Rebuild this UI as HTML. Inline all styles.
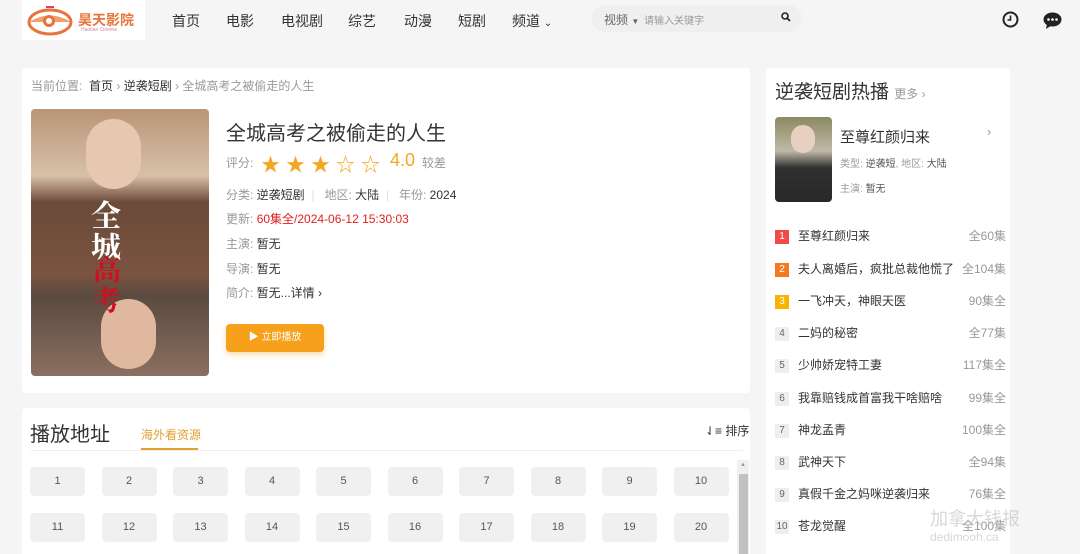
<!DOCTYPE html>
<html><head><meta charset="utf-8"><style>
*{margin:0;padding:0;box-sizing:border-box}
html,body{width:1080px;height:554px;overflow:hidden}
body{background:#f5f5f5;font-family:"Liberation Sans","Noto Sans CJK SC",sans-serif;color:#333;position:relative}
.a{position:absolute;white-space:nowrap}
.card{position:absolute;background:#fff;border-radius:4px}
.nav{font-size:14px;color:#333;top:11px}
.lbl{color:#999;font-size:12px}
.ep{position:absolute;width:55px;height:29px;background:#f0f0f0;border-radius:4px;font-size:11px;color:#555;text-align:center;line-height:29px}
.li{position:absolute;left:775px;width:256px;font-size:12px;color:#333;white-space:nowrap}
.li .n{display:inline-block;width:14px;height:14px;background:#eee;color:#666;font-size:10px;text-align:center;line-height:14px;margin-right:9px;vertical-align:middle}
.li .r{position:absolute;left:160px;width:71px;text-align:right;color:#999;white-space:nowrap}
</style></head><body>
<div class="a" style="left:22px;top:0;width:123px;height:40px;background:#fff"></div>
<svg class="a" style="left:26px;top:3px" width="50" height="34" viewBox="0 0 50 34"><ellipse cx="24" cy="19" rx="21" ry="12" fill="none" stroke="#e8743b" stroke-width="3"/><path d="M3 19 Q24 6 45 19" fill="#f0a070"/><circle cx="23" cy="18" r="6" fill="#e8743b"/><circle cx="23" cy="18" r="3" fill="#fff"/><rect x="20" y="3" width="8" height="2" fill="#e04060"/></svg>
<div class="a" style="left:78px;top:10px;font-size:14px;font-weight:bold;color:#e8743b">昊天影院</div>
<div class="a" style="left:81px;top:27px;font-size:5px;color:#c89">Haotian Cinema</div>
<div class="a nav" style="left:172px">首页</div>
<div class="a nav" style="left:226px">电影</div>
<div class="a nav" style="left:281px">电视剧</div>
<div class="a nav" style="left:348px">综艺</div>
<div class="a nav" style="left:404px">动漫</div>
<div class="a nav" style="left:458px">短剧</div>
<div class="a nav" style="left:512px">频道 <span style="font-size:10px">⌄</span></div>
<div class="a" style="left:592px;top:5px;width:210px;height:27px;background:#efefef;border-radius:14px"></div>
<div class="a" style="left:604px;top:11px;font-size:12px;color:#666">视频 <span style="font-size:8px">▼</span></div>
<div class="a" style="left:644px;top:12px;font-size:10px;color:#999">请输入关键字</div>
<svg class="a" style="left:781px;top:12px" width="10" height="10"><circle cx="4" cy="4" r="3" fill="none" stroke="#222" stroke-width="1.6"/><path d="M6 6 L9 9" stroke="#222" stroke-width="1.8"/></svg>
<svg class="a" style="left:1002px;top:11px" width="17" height="17"><circle cx="8.5" cy="8.5" r="7" fill="none" stroke="#222" stroke-width="2"/><path d="M8.5 4.5 V9 H5.5" fill="none" stroke="#222" stroke-width="1.6"/></svg>
<svg class="a" style="left:1043px;top:12px" width="19" height="17"><ellipse cx="9.5" cy="7.5" rx="9" ry="7" fill="#222"/><path d="M4 12 L3 17 L9 13z" fill="#222"/><circle cx="5.5" cy="7.5" r="1.3" fill="#fff"/><circle cx="9.5" cy="7.5" r="1.3" fill="#fff"/><circle cx="13.5" cy="7.5" r="1.3" fill="#fff"/></svg>

<div class="card" style="left:22px;top:68px;width:728px;height:325px"></div>
<div class="a" style="left:31px;top:77px;font-size:12px;color:#999">当前位置: &nbsp;<span style="color:#333">首页</span> › <span style="color:#333">逆袭短剧</span> › 全城高考之被偷走的人生</div>
<div class="a" style="left:31px;top:109px;width:178px;height:267px;border-radius:4px;overflow:hidden;background:linear-gradient(180deg,#b99577 0%,#d8c0a8 25%,#6b4a3a 35%,#7a5440 62%,#5a4a40 70%,#8a7060 100%)">
<div class="a" style="left:55px;top:10px;width:55px;height:70px;border-radius:28px;background:#e6c8b0"></div>
<div class="a" style="left:70px;top:190px;width:55px;height:70px;border-radius:28px;background:#e0b8a0"></div>
<div class="a" style="left:60px;top:88px;font-size:30px;color:#fff;font-weight:bold;font-family:'Noto Serif CJK SC',serif;line-height:32px">全<br>城</div>
<div class="a" style="left:62px;top:145px;font-size:28px;color:#d01020;font-weight:bold;font-family:'Noto Serif CJK SC',serif;line-height:30px">高<br>考</div></div>
<div class="a" style="left:226px;top:117px;font-size:20px;color:#333">全城高考之被偷走的人生</div>
<div class="a lbl" style="left:226px;top:154px">评分:</div>
<div class="a" style="left:261px;top:150px;font-size:19px;color:#f5a623;letter-spacing:6px">★★★☆☆</div>
<div class="a" style="left:390px;top:150px;font-size:18px;color:#f5a623">4.0</div>
<div class="a" style="left:422px;top:154px;font-size:12px;color:#999">较差</div>
<div class="a" style="left:226px;top:186px;font-size:12px"><span class="lbl">分类:</span> 逆袭短剧 &nbsp;<span style="color:#ddd">|</span>&nbsp; &nbsp;<span class="lbl">地区:</span> 大陆 &nbsp;<span style="color:#ddd">|</span>&nbsp; &nbsp;<span class="lbl">年份:</span> 2024</div>
<div class="a" style="left:226px;top:210px;font-size:12px"><span class="lbl">更新:</span> <span style="color:#e02020">60集全/2024-06-12 15:30:03</span></div>
<div class="a" style="left:226px;top:235px;font-size:12px"><span class="lbl">主演:</span> 暂无</div>
<div class="a" style="left:226px;top:260px;font-size:12px"><span class="lbl">导演:</span> 暂无</div>
<div class="a" style="left:226px;top:284px;font-size:12px"><span class="lbl">简介:</span> 暂无...详情 ›</div>
<div class="a" style="left:226px;top:324px;width:98px;height:28px;background:#f7a01c;border-radius:4px;color:#fff;font-size:10px;text-align:center;line-height:28px;box-shadow:0 3px 6px rgba(247,160,28,.35)">▶ 立即播放</div>

<div class="card" style="left:22px;top:408px;width:728px;height:160px"></div>
<div class="a" style="left:30px;top:418px;font-size:20px;color:#333">播放地址</div>
<div class="a" style="left:141px;top:426px;font-size:12px;color:#e0a030">海外看资源</div>
<div class="a" style="left:141px;top:448px;width:57px;height:2px;background:#e0a030"></div>
<div class="a" style="left:30px;top:450px;width:713px;height:1px;background:#f0f0f0"></div>
<div class="a" style="left:705px;top:422px;font-size:12px;color:#333">⇃≡ 排序</div>
<div class="a" style="left:737px;top:460px;width:12px;height:94px;background:#f0f0f0"></div>
<div class="a" style="left:739px;top:474px;width:9px;height:80px;background:#c1c1c1"></div>
<div class="a" style="left:740px;top:462px;font-size:6px;color:#999">▲</div>
<div id="eps"></div>

<div class="card" style="left:766px;top:68px;width:244px;height:490px"></div>
<div class="a" style="left:775px;top:77px;font-size:19px;color:#333">逆袭短剧热播 <span style="font-size:12px;color:#999">更多 ›</span></div>
<div class="a" style="left:775px;top:117px;width:57px;height:85px;border-radius:4px;background:linear-gradient(180deg,#8a8a60 0%,#c0b8a8 40%,#303030 60%,#282828 100%)"><div class="a" style="left:16px;top:8px;width:24px;height:28px;border-radius:12px;background:#e8d0c0"></div></div>
<div class="a" style="left:840px;top:126px;font-size:15px;color:#333">至尊红颜归来</div>
<div class="a" style="left:987px;top:124px;font-size:13px;color:#999">›</div>
<div class="a" style="left:840px;top:155px;font-size:10px;color:#999">类型: <span style="color:#555">逆袭短</span>, 地区: <span style="color:#555">大陆</span></div>
<div class="a" style="left:840px;top:180px;font-size:10px;color:#999">主演: <span style="color:#555">暂无</span></div>
<div class="li" style="top:227px"><span class="n" style="background:#f04a4a;color:#fff">1</span>至尊红颜归来<span class="r">全60集</span></div>
<div class="li" style="top:260px"><span class="n" style="background:#f47920;color:#fff">2</span>夫人离婚后，疯批总裁他慌了<span class="r">全104集</span></div>
<div class="li" style="top:292px"><span class="n" style="background:#f8b500;color:#fff">3</span>一飞冲天，神眼天医<span class="r">90集全</span></div>
<div class="li" style="top:324px"><span class="n">4</span>二妈的秘密<span class="r">全77集</span></div>
<div class="li" style="top:356px"><span class="n">5</span>少帅娇宠特工妻<span class="r">117集全</span></div>
<div class="li" style="top:389px"><span class="n">6</span>我靠赔钱成首富我干啥赔啥<span class="r">99集全</span></div>
<div class="li" style="top:421px"><span class="n">7</span>神龙孟青<span class="r">100集全</span></div>
<div class="li" style="top:453px"><span class="n">8</span>武神天下<span class="r">全94集</span></div>
<div class="li" style="top:485px"><span class="n">9</span>真假千金之妈咪逆袭归来<span class="r">76集全</span></div>
<div class="li" style="top:517px"><span class="n">10</span>苍龙觉醒<span class="r">全100集</span></div>
<div class="a" style="left:930px;top:505px;font-size:18px;color:rgba(200,200,200,.7)">加拿大钱报</div>
<div class="a" style="left:930px;top:530px;font-size:12px;color:rgba(200,200,200,.7)">dedimooh.ca</div>
<script>
var h='';for(var r=0;r<2;r++)for(var c=0;c<10;c++){var n=r*10+c+1;h+='<div class="ep" style="left:'+(30+c*71.5)+'px;top:'+(467+r*46)+'px">'+n+'</div>';}
document.getElementById('eps').innerHTML=h;
</script>
</body></html>
